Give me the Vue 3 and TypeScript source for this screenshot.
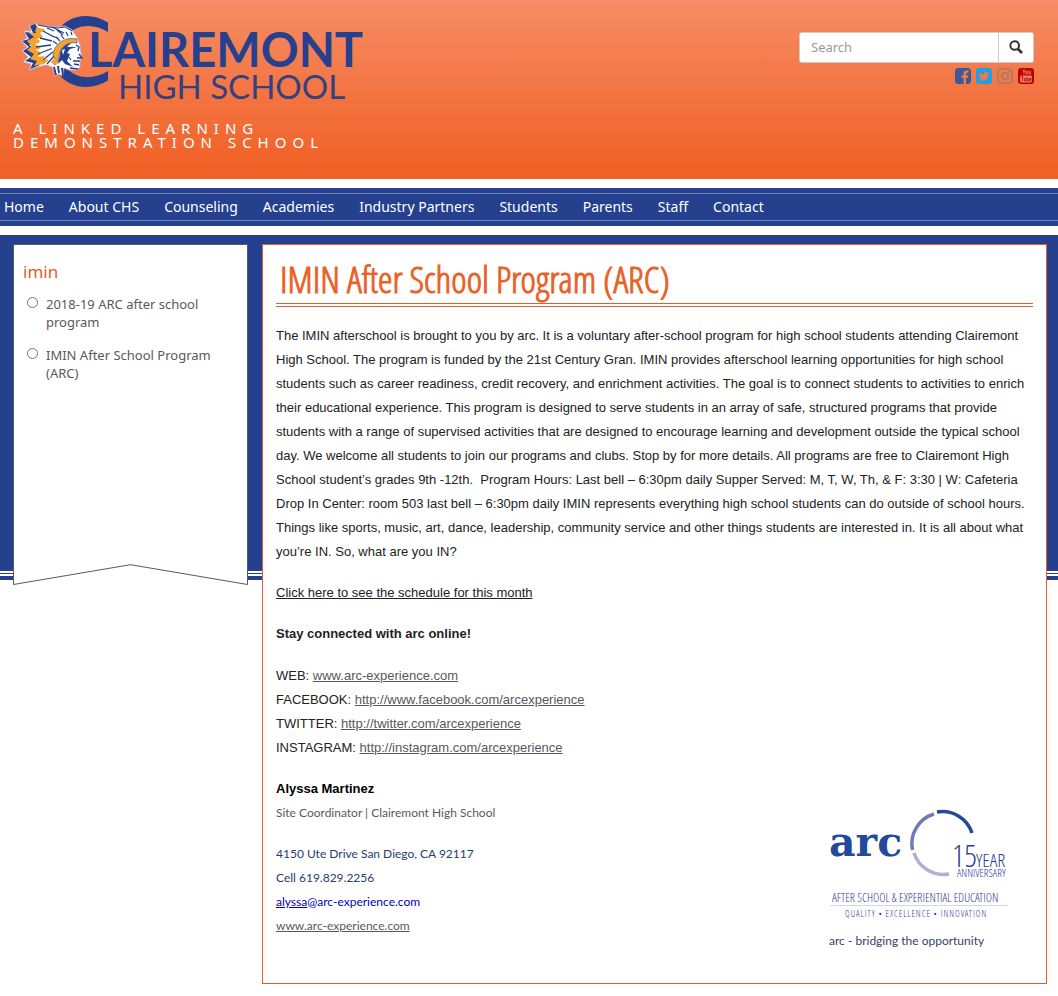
<script setup lang="ts">
interface Entry { label: string; href: string }

const nav: string[] = ['Home', 'About CHS', 'Counseling', 'Academies', 'Industry Partners', 'Students', 'Parents', 'Staff', 'Contact']
const pages: string[] = ['2018-19 ARC after school program', 'IMIN After School Program (ARC)']
const links: Entry[] = [
  { label: 'WEB:', href: 'www.arc-experience.com' },
  { label: 'FACEBOOK:', href: 'http://www.facebook.com/arcexperience' },
  { label: 'TWITTER:', href: 'http://twitter.com/arcexperience' },
  { label: 'INSTAGRAM:', href: 'http://instagram.com/arcexperience' },
]
</script>

<template>
  <div class="page">
    <header class="top">
      <div class="brand">
        <a href="#" class="logo" aria-label="Clairemont High School">
          <svg width="354" height="100" viewBox="13 10 354 100">
            <path d="M108 22.500V32C94 23 76 24 66 36L57 32C67 15 90 11 108 22.500Z" fill="#24408f" />
            <path d="M108 71V80.500C90 92 66 88 56 70L65 66C75 80 94 80 108 71Z" fill="#24408f" />
            <text x="88" y="67" class="wordmark">LAIREMONT</text>
            <text x="118" y="99" class="subword">HIGH SCHOOL</text>
            <path d="M35 22L38 25 47 26 57 27 65 26 72 30 77 37 80 45 81 53 82 58 80 61 80 67 77 70 69 70 64 68 63 77 59 74 55 76 52 67 46 65 38 67 29 70 31 64 23 62 28 57 22 51 27 47 21 41 27 38 24 31 31 31 29 25 36 26Z" fill="#fff" stroke="#c9a8b8" stroke-width="1" />
            <path d="M35 24L38 28 35 31 38 33 33 35 36 38 31 40 35 43 29 45 34 48 30 52 36 52 33 56 40 57 37 61 45 61 38 66 30 69 33 63 25 61 31 57 23 51 29 47 22 41 29 39 25 32 33 33 30 26Z" fill="#24408f" />
            <path d="M36 27L46 30 40 33 43 37 37 39 42 42 35 44 41 48 36 50 42 53 37 57 45 56 42 60 50 59 44 64 34 66 37 61 30 59 34 54 27 50 32 46 27 41 34 37 29 33 36 33Z" fill="#f5a12d" />
            <path d="M47 27L61 31 52 38 42 34ZM40 40L52 40 52 44 39 45ZM39 50L50 46 52 49 41 55ZM48 60L53 51 55 56 51 64Z" fill="#fff" />
            <path d="M43 31L54 37M40 38L52 41M36 47L51 45M38 54L53 48M43 60L54 51M52 27L64 33M57 30L63 35M50 35L60 39M47 28L54 31M47 64L55 55" fill="none" stroke="#24408f" stroke-width="1.300" />
            <path d="M38 25L48 27 58 28 65 27 72 31" fill="none" stroke="#24408f" stroke-width="1" />
            <path d="M51 46L57 39 65 34 73 34 77 38 71 37 63 41 57 48 54 57Z" fill="#fff" />
            <path d="M53 41L57 44M56 37L60 41M61 35L64 39M66 32L68 36M71 32L72 35" stroke="#24408f" stroke-width="1.200" />
            <path d="M53 56C53 45 64 36 77 39L77 43C66 41 59 49 59 57L58 62Z" fill="#f5a12d" stroke="#24408f" stroke-width=".6" />
            <path d="M60 55C60 49 65 44 71 43L67 47 77 47 70 49 67 53 70 54 67 61 73 67 65 64 62 60 58 64Z" fill="#24408f" />
            <path d="M76 45L79 47 78 51M79 54L82 58 77 58M73 61L80 61M74 64L79 65M69 57L71 60M70 68L78 69" fill="none" stroke="#24408f" stroke-width="1.300" />
            <path d="M62 50L65 49 63 55Z" fill="#fff" />
            <path d="M54 58L58 63 55 66 51 62Z" fill="#f5a12d" />
            <path d="M54 67L56 75M58 66L59 73M62 68L63 77" stroke="#24408f" stroke-width="2" />
            <path d="M56 68L57 73M60 68L61 74" stroke="#fff" stroke-width="1" />
          </svg>
        </a>
        <p class="tagline">A LINKED LEARNING<br>DEMONSTRATION SCHOOL</p>
      </div>
      <div class="tools">
        <form class="search" @submit.prevent>
          <input type="search" placeholder="Search" aria-label="Search">
          <button type="submit" aria-label="Search">
            <svg width="14" height="14" viewBox="0 0 14 14"><circle cx="5.700" cy="5.500" r="4.300" fill="none" stroke="#333" stroke-width="2" /><path d="M9 9L13 13" stroke="#333" stroke-width="2.600" /></svg>
          </button>
        </form>
        <div class="social">
          <a href="#" aria-label="Facebook"><svg viewBox="128 128 1536 1536"><path fill="#3b5998" d="M1376 128q119 0 203.500 84.500t84.500 203.500v960q0 119-84.500 203.500t-203.500 84.500h-188v-595h199l30-232h-229v-148q0-56 23.500-84t91.500-28l122-1v-207q-63-9-178-9-136 0-217.500 80t-81.500 226v171h-200v232h200v595h-532q-119 0-203.500-84.500t-84.500-203.500v-960q0-119 84.500-203.500t203.500-84.500h960z" /></svg></a>
          <a href="#" aria-label="Twitter"><svg viewBox="128 128 1536 1536"><path fill="#1da1e2" d="M1408 610q-56 25-121 34 68-40 93-117-65 38-134 51-61-66-153-66-87 0-148.500 61.500t-61.500 148.500q0 29 5 48-129-7-242-65t-192-155q-29 50-29 106 0 114 91 175-47-1-100-26v2q0 75 50 133.500t123 72.500q-29 8-51 8-13 0-39-4 21 63 74.500 104t121.500 42q-116 90-261 90-26 0-50-3 148 94 322 94 112 0 210-35.500t168-95 120.500-137 75-162 24.500-168.500q0-18-1-27 63-45 105-109zm256-194v960q0 119-84.500 203.500t-203.500 84.500h-960q-119 0-203.500-84.500t-84.500-203.500v-960q0-119 84.500-203.500t203.500-84.500h960q119 0 203.500 84.500t84.500 203.500z" /></svg></a>
          <a href="#" aria-label="Instagram"><svg viewBox="0 0 15 15"><rect x=".7" y=".7" width="13.600" height="13.600" rx="3.500" fill="none" stroke="#a3786f" stroke-width="1.400" /><circle cx="7.500" cy="7.500" r="3.100" fill="none" stroke="#a3786f" stroke-width="1.400" /><circle cx="11.500" cy="3.500" r="1" fill="#a3786f" /></svg></a>
          <a href="#" aria-label="YouTube"><svg viewBox="0 0 15 15"><rect width="15" height="15" rx="3" fill="#b00" /><path d="M4.500 1.300L5.600 4V6M6.700 1.300L5.600 4M7.400 3h1.500v2.500H7.400ZM10.300 2.500v3h1.500v-3" fill="none" stroke="#f0876a" stroke-width=".8" /><rect x="2" y="7" width="11" height="6.500" rx="1.200" fill="#f0876a" /><path d="M3 8.300H5.400M4.200 8.300V12.500M6 9.300V12.200H7.300V9.300M8.400 8V12.200H9.600V9.800H8.400M12.200 12.200H10.900V9.600H12.200V10.900H10.900" fill="none" stroke="#b00" stroke-width=".7" /></svg></a>
        </div>
      </div>
    </header>

    <nav class="menu">
      <ul><li v-for="n in nav" :key="n"><a href="#">{{ n }}</a></li></ul>
    </nav>

    <main class="main">
      <aside class="side">
        <div class="side-body">
          <h2>imin</h2>
          <ul><li v-for="p in pages" :key="p"><a href="#">{{ p }}</a></li></ul>
        </div>
        <svg class="notch" viewBox="0 0 235 21" preserveAspectRatio="none"><path d="M.5 0V20.500L117.500 .7 234.500 20.500V0" fill="none" stroke="#58595b" vector-effect="non-scaling-stroke" /></svg>
      </aside>

      <article class="content">
        <h1>IMIN After School Program (ARC)</h1>
        <p>The IMIN afterschool is brought to you by arc. It is a voluntary after-school program for high school students attending Clairemont High School. The program is funded by the 21st Century Gran. IMIN provides afterschool learning opportunities for high school students such as career readiness, credit recovery, and enrichment activities. The goal is to connect students to activities to enrich their educational experience. This program is designed to serve students in an array of safe, structured programs that provide students with a range of supervised activities that are designed to encourage learning and development outside the typical school day. We welcome all students to join our programs and clubs. Stop by for more details. All programs are free to Clairemont High School student’s grades 9th -12th.&nbsp; Program Hours: Last bell – 6:30pm daily Supper Served: M, T, W, Th, &amp; F: 3:30 | W: Cafeteria Drop In Center: room 503 last bell – 6:30pm daily IMIN represents everything high school students can do outside of school hours. Things like sports, music, art, dance, leadership, community service and other things students are interested in. It is all about what you’re IN. So, what are you IN?</p>
        <p><a class="schedule" href="#">Click here to see the schedule for this month</a></p>
        <p class="stay"><strong>Stay connected with arc online!</strong></p>
        <ul class="links">
          <li v-for="l in links" :key="l.label">{{ l.label }} <a href="#">{{ l.href }}</a></li>
        </ul>
        <div class="signature">
          <div class="contact">
            <strong>Alyssa Martinez</strong>
            <p class="role">Site Coordinator | Clairemont High School</p>
            <address>
              4150 Ute Drive San Diego, CA 92117<br>
              Cell 619.829.2256<br>
              <a class="mail" href="#"><u>alyssa</u>@arc-experience.com</a><br>
              <a class="web" href="#">www.arc-experience.com</a>
            </address>
          </div>
          <div class="arc">
            <svg width="190" height="116" viewBox="829 808 190 116">
              <text x="829" y="856" class="arc-word">arc</text>
              <g fill="none" stroke-width="3.500">
                <path d="M937 812A31 31 0 0 1 972 833" stroke="#24499c" />
                <path d="M934 814A31 31 0 0 0 912.500 850" stroke="#7479b5" />
                <path d="M914 853A31 31 0 0 0 949 874" stroke="#aeb0d8" />
              </g>
              <text x="952" y="867" class="fifteen">15</text>
              <text x="976" y="867" class="year">YEAR</text>
              <text x="957" y="877" class="anniv">ANNIVERSARY</text>
              <text x="832" y="902" class="edu">AFTER SCHOOL &amp; EXPERIENTIAL EDUCATION</text>
              <path d="M830 905.500H1008" stroke="#d5d6e5" />
              <text x="845" y="917" class="values">QUALITY • EXCELLENCE • INNOVATION</text>
            </svg>
            <p>arc - bridging the opportunity</p>
          </div>
        </div>
      </article>
    </main>
  </div>
</template>

<style>
body { margin: 0; background: #fff; }
</style>

<style scoped>
* { box-sizing: border-box; }
.page { font-family: "Liberation Sans", Arial, sans-serif; font-size: 13px; color: #222; }
ul { list-style: none; margin: 0; padding: 0; }
p, h1, h2 { margin: 0; }
.top { display: flex; justify-content: space-between; min-height: 179px; padding: 10px 24px 0 13px; background: linear-gradient(#f68d65, #f05e22); }
.logo, .logo svg { display: block; }
.wordmark { font: bold 47px Lato, sans-serif; fill: #24408f; }
.subword { font: 33px Lato, sans-serif; fill: #35407f; }
.tagline { margin-top: 11px; font: 15px/14px "Noto Sans", sans-serif; letter-spacing: 6px; color: #fff; }
.tools { width: 235px; padding-top: 22px; }
.search { display: flex; height: 31px; border: 1px solid #ccc; border-radius: 3px; background: #fff; overflow: hidden; }
.search input { flex: 1; min-width: 0; border: 0; padding: 0 11px 2px; font: 13px "Noto Sans", sans-serif; background: #fff; }
.search input::placeholder { color: #999; }
.search button { width: 35px; padding: 0 0 2px; border: 0; border-left: 1px solid #ccc; background: #fff; }
.search button svg { display: block; margin: 0 auto; }
.social { display: flex; justify-content: flex-end; gap: 5px; margin-top: 5px; }
.social svg { display: block; width: 16px; height: 16px; }
.menu { margin: 9px 0; padding: 5px 0; background: #24408f; }
.menu ul { display: flex; gap: 25px; height: 28px; padding-left: 4px; border: solid #6f86be; border-width: 1px 0; }
.menu a { font: 14px/26px "Noto Sans", sans-serif; color: #fff; text-decoration: none; white-space: nowrap; }
.main { display: grid; grid-template-columns: 235px minmax(0, 1fr); align-items: start; gap: 14px; padding: 9px 11px 12px 13px;
  background: linear-gradient(#24408f 336px, #fff 336px 338px, #24408f 338px 339px, #fff 339px 341px, #24408f 341px 345px, #fff 345px); }
.side { background: #fff; }
.side-body { min-height: 320px; padding: 15px 8px 0 9px; border: 1px solid #58595b; border-bottom: 0; }
.side h2 { font: 17px/24px "Noto Sans", sans-serif; color: #e05f2c; }
.side ul { padding: 11px 20px 0 3px; }
.side li { position: relative; padding-left: 20px; margin-bottom: 15px; font: 13px/18px "Noto Sans", sans-serif; }
.side li::before { content: ""; position: absolute; left: 1px; top: 2px; width: 9px; height: 9px; border: 1px solid #777; border-radius: 50%; }
.side a { color: #58595b; text-decoration: none; }
.notch { display: block; width: 100%; height: 21px; }
.content { padding: 12px 13px 30px; background: #fff; border: 1px solid #e05f2c; }
h1 { padding: 0 4px 2px; margin-bottom: 17px; border-bottom: 4px double #e05f2c; font: 300 37px/44px "Open Sans Condensed Light", "Open Sans Condensed", sans-serif; color: #ea6027; -webkit-text-stroke: 1px #ea6027; }
.content p, .links, address { line-height: 24px; }
.content > p { margin-bottom: 17px; }
.content > .stay { margin-bottom: 18px; }
.content a { color: #58595b; text-decoration: underline; }
.content .schedule { color: #222; }
.links { margin-bottom: 17px; }
.signature { display: flex; justify-content: space-between; }
.contact strong { display: block; line-height: 24px; color: #000; }
.contact .role { font: 12px/24px Lato, sans-serif; color: #58595b; margin-bottom: 17px; }
address { font: 12px/24px Lato, sans-serif; color: #24406f; }
.content .mail { color: #0000c0; text-decoration: none; }
.arc { width: 204px; padding-top: 31px; }
.arc svg { display: block; }
.arc p { margin-top: 5px; font: 12px/24px Lato, sans-serif; color: #3b4068; }
.arc-word { font: bold 41px "DejaVu Serif", serif; fill: #24499c; }
.fifteen, .year, .anniv, .edu, .values { font-family: "Open Sans Condensed Light", "Open Sans Condensed", sans-serif; font-weight: 300; fill: #2c3a92; }
.fifteen { font-size: 31px; }
.year { font-size: 19px; }
.anniv { font-size: 11px; }
.edu { font-size: 12px; }
.values { font-size: 9px; letter-spacing: 1px; }
</style>
